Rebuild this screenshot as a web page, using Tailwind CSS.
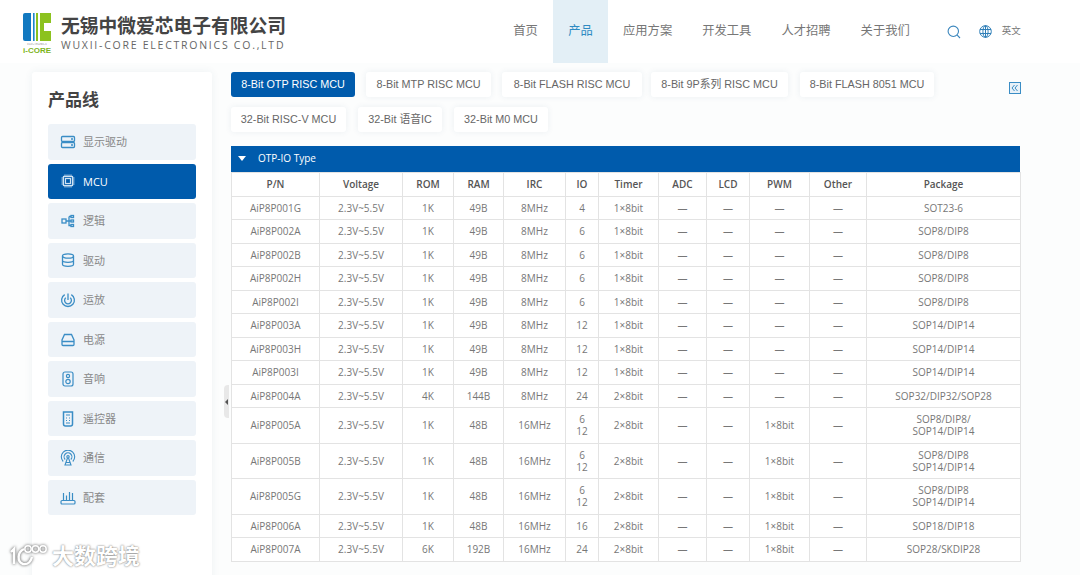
<!DOCTYPE html>
<html lang="zh-CN">
<head>
    <meta charset="UTF-8">
    <meta name="viewport" content="width=device-width, initial-scale=1.0">
    <title>无锡中微爱芯电子有限公司</title>
    <script src="https://cdn.jsdelivr.net/npm/@tailwindcss/browser@4"></script>
</head>
<body class="relative h-[575px] w-[1080px] overflow-hidden bg-[#fcfdfd] font-['Open_Sans','Noto_Sans_CJK_SC',sans-serif] text-[#666]">

    <!-- Header -->
    <header class="flex h-[63px] items-start bg-white pl-[23px]">
        <div class="mt-[13px] flex w-[28px] flex-col items-stretch">
            <svg width="28" height="28" viewBox="0 0 28 28">
                <path d="M2 0H8V28H2A2 2 0 0 1 0 26V2A2 2 0 0 1 2 0Z" fill="#1279c0"/>
                <rect x="10" y="0" width="1.6" height="28" fill="#1f86cc"/>
                <rect x="13" y="0" width="2" height="28" fill="#8cc21f"/>
                <path d="M17 0H28V10H21V18H28V28H17Z" fill="#8cc21f"/>
            </svg>
            <span class="mt-[2px] h-[3px] overflow-hidden text-center text-[3px] leading-[3px] whitespace-nowrap text-[#888]">ELECTRONICS</span>
            <span class="font-['Liberation_Sans'] text-[8px] leading-[9px] font-bold whitespace-nowrap text-[#7db51c]">i-CORE</span>
        </div>
        <div class="mt-[13px] ml-[10px] w-[240px]">
            <div class="text-[18.75px] leading-[25px] font-bold whitespace-nowrap text-[#444]">无锡中微爱芯电子有限公司</div>
            <div class="mt-[1px] text-[10.5px] leading-[13px] tracking-[1.75px] whitespace-nowrap text-[#666]">WUXII-CORE ELECTRONICS CO.,LTD</div>
        </div>

        <nav class="ml-[197px] flex h-[63px] items-center text-[12.3px] text-[#777]">
            <a class="flex h-full w-[55px] items-center justify-center">首页</a>
            <a class="flex h-full w-[55px] items-center justify-center bg-[#e3eff6] text-[#2f8bc2]">产品</a>
            <a class="ml-[15px] flex h-full items-center">应用方案</a>
            <a class="ml-[30px] flex h-full items-center">开发工具</a>
            <a class="ml-[30px] flex h-full items-center">人才招聘</a>
            <a class="ml-[30px] flex h-full items-center">关于我们</a>
            <svg class="ml-[37px]" width="14" height="14" viewBox="0 0 14 14" fill="none" stroke="#3a86bd" stroke-width="1.1">
                <circle cx="6.3" cy="6.3" r="5.2"/>
                <path d="M10.2 10.2L13 13"/>
            </svg>
            <svg class="ml-[18px]" width="13" height="13" viewBox="0 0 13 13" fill="none" stroke="#2f7fb8" stroke-width="1">
                <circle cx="6.5" cy="6.5" r="5.8"/>
                <ellipse cx="6.5" cy="6.5" rx="2.6" ry="5.8"/>
                <path d="M6.5 .7V12.3M1 4.5H12M1 8.5H12"/>
            </svg>
            <span class="ml-[10px] text-[9.5px]">英文</span>
        </nav>
    </header>

    <div class="mt-[9px] flex pl-[32px]">
        <!-- Product line sidebar -->
        <aside class="h-[520px] w-[180px] shrink-0 rounded-t-[3px] bg-white px-[16px] shadow-[0_0_8px_rgba(40,80,120,0.07)]">
            <h2 class="mt-[16px] mb-[13px] h-[23px] text-[17px] leading-[23px] font-bold text-[#444]">产品线</h2>
            <ul class="flex flex-col gap-[4px] text-[11px] text-[#888]">
                <li class="flex h-[35.55px] items-center rounded-[3px] bg-[#eef3f8] pl-[12px]">
                    <svg class="mr-[7px]" width="16" height="16" viewBox="0 0 16 16" fill="none" stroke="#3a8dc5" stroke-width="1.3">
                        <rect x="1.5" y="2.5" width="13" height="5" rx="1"/>
                        <rect x="1.5" y="8.5" width="13" height="5" rx="1"/>
                        <path d="M11 5h2M11 11h2"/>
                    </svg>
                    <span class="pt-px">显示驱动</span>
                </li>
                <li class="flex h-[35.55px] items-center rounded-[3px] bg-[#005bac] pl-[12px] text-white">
                    <svg class="mr-[7px]" width="16" height="16" viewBox="0 0 16 16" fill="none" stroke="#cfe2f2" stroke-width="1.2">
                        <rect x="3.5" y="3.5" width="9" height="9"/>
                        <rect x="5.5" y="5.5" width="5" height="5"/>
                        <path d="M5 1.5v2M7 1.5v2M9 1.5v2M11 1.5v2M5 12.5v2M7 12.5v2M9 12.5v2M11 12.5v2M1.5 5h2M1.5 7h2M1.5 9h2M1.5 11h2M12.5 5h2M12.5 7h2M12.5 9h2M12.5 11h2" stroke-width="1"/>
                    </svg>
                    <span class="pt-px">MCU</span>
                </li>
                <li class="flex h-[35.55px] items-center rounded-[3px] bg-[#eef3f8] pl-[12px]">
                    <svg class="mr-[7px]" width="16" height="16" viewBox="0 0 16 16" fill="none" stroke="#3a8dc5" stroke-width="1.3">
                        <rect x="2" y="6" width="4" height="4"/>
                        <path d="M6 8H9M9 3.5V12.5H11M9 3.5H11M9 8H11"/>
                        <rect x="11" y="2.5" width="2.5" height="2"/>
                        <rect x="11" y="7" width="2.5" height="2"/>
                        <rect x="11" y="11.5" width="2.5" height="2"/>
                    </svg>
                    <span class="pt-px">逻辑</span>
                </li>
                <li class="flex h-[35.55px] items-center rounded-[3px] bg-[#eef3f8] pl-[12px]">
                    <svg class="mr-[7px]" width="16" height="16" viewBox="0 0 16 16" fill="none" stroke="#3a8dc5" stroke-width="1.3">
                        <ellipse cx="8" cy="4" rx="5.5" ry="2.2"/>
                        <path d="M2.5 4V12.2C2.5 13.5 5 14.3 8 14.3S13.5 13.5 13.5 12.2V4M2.5 8.2C2.5 9.4 5 10.3 8 10.3S13.5 9.4 13.5 8.2"/>
                    </svg>
                    <span class="pt-px">驱动</span>
                </li>
                <li class="flex h-[35.55px] items-center rounded-[3px] bg-[#eef3f8] pl-[12px]">
                    <svg class="mr-[7px]" width="16" height="16" viewBox="0 0 16 16" fill="none" stroke="#3a8dc5" stroke-width="1.3">
                        <path d="M4.7 2.6A6.4 6.4 0 1 0 11.3 2.6M5.8 5.8A3.4 3.4 0 1 0 10.2 5.8M8 1.5V8"/>
                    </svg>
                    <span class="pt-px">运放</span>
                </li>
                <li class="flex h-[35.55px] items-center rounded-[3px] bg-[#eef3f8] pl-[12px]">
                    <svg class="mr-[7px]" width="16" height="16" viewBox="0 0 16 16" fill="none" stroke="#3a8dc5" stroke-width="1.3">
                        <path d="M4.5 2.5H11.5L14 8V12.5A1 1 0 0 1 13 13.5H3A1 1 0 0 1 2 12.5V8ZM2 9.5H14"/>
                    </svg>
                    <span class="pt-px">电源</span>
                </li>
                <li class="flex h-[35.55px] items-center rounded-[3px] bg-[#eef3f8] pl-[12px]">
                    <svg class="mr-[7px]" width="16" height="16" viewBox="0 0 16 16" fill="none" stroke="#3a8dc5" stroke-width="1.2">
                        <rect x="3" y="1" width="10" height="14" rx="2"/>
                        <circle cx="8" cy="5" r="1.6"/>
                        <circle cx="8" cy="10.5" r="2.2"/>
                    </svg>
                    <span class="pt-px">音响</span>
                </li>
                <li class="flex h-[35.55px] items-center rounded-[3px] bg-[#eef3f8] pl-[12px]">
                    <svg class="mr-[7px]" width="16" height="16" viewBox="0 0 16 16" fill="none" stroke="#3a8dc5" stroke-width="1.2">
                        <path d="M3.5 1H12.5V13A2 2 0 0 1 10.5 15H5.5A2 2 0 0 1 3.5 13Z" stroke-width="1.5"/>
                        <path d="M6 4H10M6 7H7M9 7H10M6 9.5H7M9 9.5H10M6 12H10"/>
                    </svg>
                    <span class="pt-px">遥控器</span>
                </li>
                <li class="flex h-[35.55px] items-center rounded-[3px] bg-[#eef3f8] pl-[12px]">
                    <svg class="mr-[7px]" width="16" height="16" viewBox="0 0 16 16" fill="none" stroke="#3a8dc5" stroke-width="1.1">
                        <path d="M3.2 11.5A6.7 6.7 0 1 1 12.8 11.5M5.2 9.5A3.9 3.9 0 1 1 10.8 9.5"/>
                        <circle cx="8" cy="6.8" r="1.2"/>
                        <path d="M7.5 8L5 15H11L8.5 8M6 12.5H10"/>
                    </svg>
                    <span class="pt-px">通信</span>
                </li>
                <li class="flex h-[35.55px] items-center rounded-[3px] bg-[#eef3f8] pl-[12px]">
                    <svg class="mr-[7px]" width="16" height="16" viewBox="0 0 16 16" fill="none" stroke="#3a8dc5" stroke-width="1.2">
                        <rect x="1" y="10.5" width="14" height="3.5" rx="1"/>
                        <path d="M3.5 3V10.5M6.5 5.5V10.5M9.5 2V10.5M12.5 3V10.5"/>
                    </svg>
                    <span class="pt-px">配套</span>
                </li>
            </ul>
        </aside>

        <!-- Main -->
        <main class="relative ml-[19px] w-[789px] shrink-0">
            <div class="flex flex-col gap-[10px] font-['Liberation_Sans','Noto_Sans_CJK_SC',sans-serif] text-[10.8px] text-[#666]">
                <div class="flex">
                    <span class="flex h-[25px] w-[124px] items-center justify-center rounded-[3px] bg-[#005bac] text-white">8-Bit OTP RISC MCU</span>
                    <span class="ml-[11px] flex h-[25px] w-[125px] items-center justify-center rounded-[3px] bg-white shadow-[0_0_6px_rgba(40,80,120,0.08)]">8-Bit MTP RISC MCU</span>
                    <span class="ml-[11px] flex h-[25px] w-[140px] items-center justify-center rounded-[3px] bg-white shadow-[0_0_6px_rgba(40,80,120,0.08)]">8-Bit FLASH RISC MCU</span>
                    <span class="ml-[9px] flex h-[25px] w-[137px] items-center justify-center rounded-[3px] bg-white shadow-[0_0_6px_rgba(40,80,120,0.08)]">8-Bit 9P系列 RISC MCU</span>
                    <span class="ml-[12px] flex h-[25px] w-[134px] items-center justify-center rounded-[3px] bg-white shadow-[0_0_6px_rgba(40,80,120,0.08)]">8-Bit FLASH 8051 MCU</span>
                </div>
                <div class="flex">
                    <span class="flex h-[25px] w-[115px] items-center justify-center rounded-[3px] bg-white shadow-[0_0_6px_rgba(40,80,120,0.08)]">32-Bit RISC-V MCU</span>
                    <span class="ml-[12px] flex h-[25px] w-[84px] items-center justify-center rounded-[3px] bg-white shadow-[0_0_6px_rgba(40,80,120,0.08)]">32-Bit 语音IC</span>
                    <span class="ml-[12px] flex h-[25px] w-[94px] items-center justify-center rounded-[3px] bg-white shadow-[0_0_6px_rgba(40,80,120,0.08)]">32-Bit M0 MCU</span>
                </div>
            </div>

            <!-- collapse icon -->
            <svg class="absolute top-[10px] left-[778px]" width="12" height="12" viewBox="0 0 12 12" fill="none" stroke="#3a8dc5" stroke-width="1">
                <rect x=".5" y=".5" width="11" height="11" fill="#e8f1f8"/>
                <path d="M5.5 3L3 6L5.5 9M8.5 3L6 6L8.5 9"/>
            </svg>

            <!-- sidebar handle -->
            <div class="absolute top-[313px] left-[-7px] flex h-[33px] w-[5px] items-center justify-center rounded-l-[4px] bg-[#e8e8e8]">
                <span class="h-0 w-0 border-y-[3px] border-r-[3px] border-y-transparent border-r-[#555]"></span>
            </div>

            <div class="mt-[14px] flex h-[25.5px] items-center bg-[#005bac] pl-[7px] text-[10px] text-white">
                <span class="h-0 w-0 border-x-[4px] border-t-[5px] border-x-transparent border-t-white"></span>
                <span class="ml-[12px]">OTP-IO Type</span>
            </div>

            <table class="w-[789px] table-fixed border-collapse bg-white text-center text-[10px] leading-[12px] text-[#777] [&_td]:border [&_td]:border-[#e3e3e3] [&_td]:p-0 [&_th]:border [&_th]:border-[#e3e3e3] [&_th]:p-0 [&_th]:font-semibold [&_th]:text-[#555]">
                <colgroup>
                    <col class="w-[88px]"><col class="w-[83px]"><col class="w-[51px]"><col class="w-[50px]"><col class="w-[62px]"><col class="w-[33px]"><col class="w-[60px]"><col class="w-[48px]"><col class="w-[43px]"><col class="w-[60px]"><col class="w-[57px]"><col class="w-[154px]">
                </colgroup>
                <thead>
                    <tr class="h-[24px]"><th>P/N</th><th>Voltage</th><th>ROM</th><th>RAM</th><th>IRC</th><th>IO</th><th>Timer</th><th>ADC</th><th>LCD</th><th>PWM</th><th>Other</th><th>Package</th></tr>
                </thead>
                <tbody>
                    <tr class="h-[23.5px]"><td>AiP8P001G</td><td>2.3V~5.5V</td><td>1K</td><td>49B</td><td>8MHz</td><td>4</td><td>1×8bit</td><td>—</td><td>—</td><td>—</td><td>—</td><td>SOT23-6</td></tr>
                    <tr class="h-[23.5px]"><td>AiP8P002A</td><td>2.3V~5.5V</td><td>1K</td><td>49B</td><td>8MHz</td><td>6</td><td>1×8bit</td><td>—</td><td>—</td><td>—</td><td>—</td><td>SOP8/DIP8</td></tr>
                    <tr class="h-[23.5px]"><td>AiP8P002B</td><td>2.3V~5.5V</td><td>1K</td><td>49B</td><td>8MHz</td><td>6</td><td>1×8bit</td><td>—</td><td>—</td><td>—</td><td>—</td><td>SOP8/DIP8</td></tr>
                    <tr class="h-[23.5px]"><td>AiP8P002H</td><td>2.3V~5.5V</td><td>1K</td><td>49B</td><td>8MHz</td><td>6</td><td>1×8bit</td><td>—</td><td>—</td><td>—</td><td>—</td><td>SOP8/DIP8</td></tr>
                    <tr class="h-[23.5px]"><td>AiP8P002I</td><td>2.3V~5.5V</td><td>1K</td><td>49B</td><td>8MHz</td><td>6</td><td>1×8bit</td><td>—</td><td>—</td><td>—</td><td>—</td><td>SOP8/DIP8</td></tr>
                    <tr class="h-[23.5px]"><td>AiP8P003A</td><td>2.3V~5.5V</td><td>1K</td><td>49B</td><td>8MHz</td><td>12</td><td>1×8bit</td><td>—</td><td>—</td><td>—</td><td>—</td><td>SOP14/DIP14</td></tr>
                    <tr class="h-[23.5px]"><td>AiP8P003H</td><td>2.3V~5.5V</td><td>1K</td><td>49B</td><td>8MHz</td><td>12</td><td>1×8bit</td><td>—</td><td>—</td><td>—</td><td>—</td><td>SOP14/DIP14</td></tr>
                    <tr class="h-[23.5px]"><td>AiP8P003I</td><td>2.3V~5.5V</td><td>1K</td><td>49B</td><td>8MHz</td><td>12</td><td>1×8bit</td><td>—</td><td>—</td><td>—</td><td>—</td><td>SOP14/DIP14</td></tr>
                    <tr class="h-[23.5px]"><td>AiP8P004A</td><td>2.3V~5.5V</td><td>4K</td><td>144B</td><td>8MHz</td><td>24</td><td>2×8bit</td><td>—</td><td>—</td><td>—</td><td>—</td><td>SOP32/DIP32/SOP28</td></tr>
                    <tr class="h-[35.5px]"><td>AiP8P005A</td><td>2.3V~5.5V</td><td>1K</td><td>48B</td><td>16MHz</td><td>6<br>12</td><td>2×8bit</td><td>—</td><td>—</td><td>1×8bit</td><td>—</td><td>SOP8/DIP8/<br>SOP14/DIP14</td></tr>
                    <tr class="h-[35.5px]"><td>AiP8P005B</td><td>2.3V~5.5V</td><td>1K</td><td>48B</td><td>16MHz</td><td>6<br>12</td><td>2×8bit</td><td>—</td><td>—</td><td>1×8bit</td><td>—</td><td>SOP8/DIP8<br>SOP14/DIP14</td></tr>
                    <tr class="h-[35.5px]"><td>AiP8P005G</td><td>2.3V~5.5V</td><td>1K</td><td>48B</td><td>16MHz</td><td>6<br>12</td><td>2×8bit</td><td>—</td><td>—</td><td>1×8bit</td><td>—</td><td>SOP8/DIP8<br>SOP14/DIP14</td></tr>
                    <tr class="h-[23.5px]"><td>AiP8P006A</td><td>2.3V~5.5V</td><td>1K</td><td>48B</td><td>16MHz</td><td>16</td><td>2×8bit</td><td>—</td><td>—</td><td>1×8bit</td><td>—</td><td>SOP18/DIP18</td></tr>
                    <tr class="h-[23.5px]"><td>AiP8P007A</td><td>2.3V~5.5V</td><td>6K</td><td>192B</td><td>16MHz</td><td>24</td><td>2×8bit</td><td>—</td><td>—</td><td>1×8bit</td><td>—</td><td>SOP28/SKDIP28</td></tr>
                </tbody>
            </table>
        </main>
    </div>

    <!-- Watermark -->
    <div class="absolute top-[543px] left-[10px] flex items-center">
        <svg width="38" height="22" viewBox="0 0 38 22" fill="none" stroke="#fff" stroke-width="2.4" class="drop-shadow-[0_0_1.5px_rgba(0,0,0,0.7)]">
            <path d="M1 8L4 5V20"/>
            <path d="M14 5C7 8 7 18 13 20C18 21 21 17 22 13"/>
            <circle cx="18" cy="5" r="3.2" stroke-width="1.5"/>
            <circle cx="25.5" cy="5" r="3.2" stroke-width="1.5"/>
            <circle cx="33" cy="5" r="3.2" stroke-width="1.5"/>
        </svg>
        <span class="ml-[4px] text-[22px] leading-[24px] font-bold text-white [text-shadow:0_0_2px_rgba(0,0,0,0.65)]">大数跨境</span>
    </div>
</body>
</html>
